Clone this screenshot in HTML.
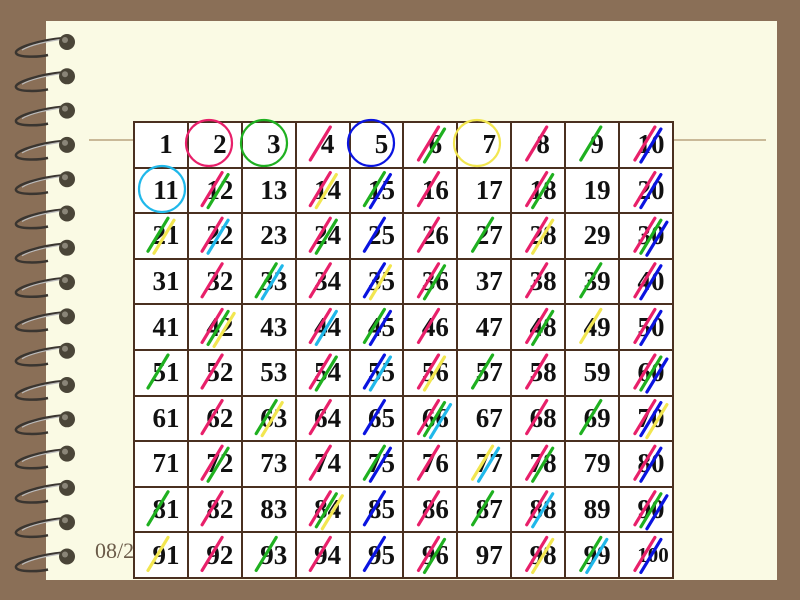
<!DOCTYPE html>
<html><head><meta charset="utf-8">
<style>
html,body{margin:0;padding:0;}
body{width:800px;height:600px;background:#8a6f57;position:relative;overflow:hidden;font-family:"Liberation Serif",serif;}
#paper{position:absolute;left:46px;top:21px;width:731px;height:559px;background:#fafae4;}
.hl{position:absolute;top:139px;height:2px;background:#c9b998;}
#date{position:absolute;left:95px;top:538px;font-size:22px;color:#6a5a48;}
table{position:absolute;left:133px;top:121px;width:541px;height:456px;table-layout:fixed;border-collapse:collapse;background:#fff;border:2px solid #4a3020;}
td{height:45.6px;border:2px solid #4a3020;padding:0 0 0 10px;box-sizing:border-box;text-align:center;font-weight:bold;font-size:27px;color:#111;line-height:1;}
td.s{font-size:21px;padding-left:14px;}
svg{position:absolute;left:0;top:0;}
</style></head><body>
<div id="paper"></div>
<div class="hl" style="left:89px;width:44px"></div>
<div class="hl" style="left:674px;width:92px"></div>
<div id="date">08/23</div>
<table id="t"></table>
<svg id="ov" width="800" height="600"></svg>
<script>
var t=document.getElementById('t'),h='';
for(var r=0;r<10;r++){h+='<tr>';for(var c=0;c<10;c++){var n=r*10+c+1;h+='<td'+(n==100?' class="s"':'')+'>'+n+'</td>';}h+='</tr>';}
t.innerHTML=h;
var s='';
for(var i=0;i<16;i++){var y=42+i*34.3;
s+='<path d="M64 '+(y-4)+' C40 '+(y-2)+' 14 '+(y+6)+' 16 '+(y+11)+' C18 '+(y+16)+' 40 '+(y+15)+' 48 '+(y+13)+'" fill="none" stroke="#3a3530" stroke-width="2.5"/>';
s+='<path d="M64 '+(y-3)+' C48 '+(y-1)+' 30 '+(y+3)+' 22 '+(y+8)+'" fill="none" stroke="#bbb" stroke-width="1.2"/>';
s+='<circle cx="67" cy="'+y+'" r="8" fill="#4a4538"/><circle cx="65" cy="'+(y-2)+'" r="3" fill="#8a8578"/>';}
var col={2:'#e8206a',3:'#1fb020',5:'#0a14e0',7:'#f2e650',11:'#20b8ea'};
var L=133,T=121,W=54.1,H=45.6;
for(var n=1;n<=100;n++){var r=Math.floor((n-1)/10),c=(n-1)%10;var x0=L+c*W,y0=T+r*H,k=0;
[2,3,5,7,11].forEach(function(p){if(n%p==0&&n!=p){var sx=x0+15+k*6,sy=y0+39+k*2;
s+='<line x1="'+sx+'" y1="'+sy+'" x2="'+(sx+20)+'" y2="'+(sy-33)+'" stroke="'+col[p]+'" stroke-width="3.2" stroke-linecap="round"/>';k++;}});}
[[2,209,143],[3,264,143],[5,371,143],[7,477,143],[11,162,189]].forEach(function(a){
s+='<circle cx="'+a[1]+'" cy="'+a[2]+'" r="23" fill="none" stroke="'+col[a[0]]+'" stroke-width="2.2"/>';});
document.getElementById('ov').innerHTML=s;
</script>
</body></html>
